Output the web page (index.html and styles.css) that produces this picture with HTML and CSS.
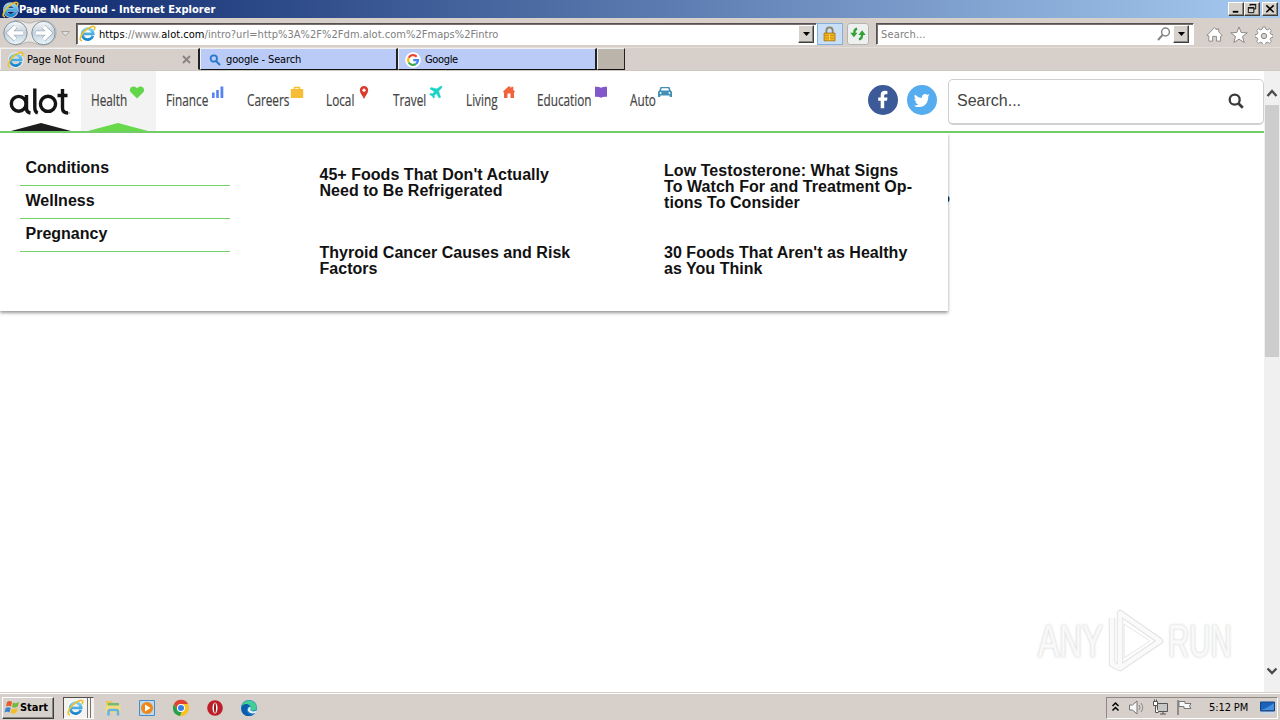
FILE: index.html
```html
<!DOCTYPE html>
<html lang="en">
<head>
<meta charset="utf-8">
<title>Page Not Found</title>
<link rel="stylesheet" href="styles.css">
</head>
<body>
<svg class="defs" width="0" height="0" aria-hidden="true">
  <defs>
    <linearGradient id="ieBlue" x1="0" y1="0" x2="0" y2="1"><stop offset="0" stop-color="#7ed4f6"/><stop offset="1" stop-color="#1683ca"/></linearGradient>
    <linearGradient id="orb" x1="0" y1="0" x2="0" y2="1"><stop offset="0" stop-color="#f6f9fb"/><stop offset=".5" stop-color="#c3d1dc"/><stop offset="1" stop-color="#e9f6fb"/></linearGradient>
    <symbol id="ie" viewBox="0 0 18 18">
      <path d="M15.2 11.6A6.2 6.2 0 1 1 15.5 9.2H5.2" fill="none" stroke="#fff" stroke-width="4.2" opacity=".7"/>
      <path d="M14.7 11.5A5.8 5.8 0 1 1 15 9.4H5" fill="none" stroke="url(#ieBlue)" stroke-width="3"/>
      <path d="M3.2 16.5C-.2 17 1 11.500 5.600 6.700 10 2.200 16 .2 16.700 2.400c.3.900-.2 2-.9 3.100" fill="none" stroke="#eec02c" stroke-width="1.700"/>
    </symbol>
  </defs>
</svg>
<div class="desktop">
  <header class="titlebar">
    <svg class="ie-title" viewBox="0 0 18 18"><use href="#ie"/></svg>
    <span class="title-text">Page Not Found - Internet Explorer</span>
    <div class="window-buttons">
      <span class="bevel wbtn"><svg viewBox="0 0 15 13"><path d="M4 9.500h6" stroke="#000" stroke-width="2"/></svg></span>
      <span class="bevel wbtn"><svg viewBox="0 0 15 13"><path d="M5.500 3V1.500h6v5H9.500M3.500 5.500h6v5h-6zM5 2h7M3 5h7" fill="none" stroke="#000"/></svg></span>
      <span class="bevel wbtn wclose"><svg viewBox="0 0 15 13"><path d="M3.500 2.500l8 7.500M11.500 2.500l-8 7.500" stroke="#000" stroke-width="1.700"/></svg></span>
    </div>
  </header>

  <div class="toolbar">
    <svg class="navorbs" viewBox="0 0 76 29">
      <path d="M15 2.500C22 2 25 5 29 5s8-3 15-2.500A12 12 0 0 1 44 27C37 27 34 24 29 24s-7 3-14 3z" fill="#e9e7e5" stroke="#aaa8a6" stroke-width=".8"/>
      <circle cx="15.500" cy="15" r="11.700" fill="url(#orb)" stroke="#85929c" stroke-width="1"/>
      <circle cx="43.500" cy="15" r="11.700" fill="url(#orb)" stroke="#85929c" stroke-width="1"/>
      <path d="M23 15H9.500M15.500 8.500L9 15l6.500 6.500" fill="none" stroke="#a3b1bd" stroke-width="4.800"/>
      <path d="M23 15H9.500M15.500 8.500L9 15l6.500 6.500" fill="none" stroke="#fff" stroke-width="3.400"/>
      <path d="M36 15h13.500M43.500 8.500L50 15l-6.500 6.500" fill="none" stroke="#a3b1bd" stroke-width="4.800"/>
      <path d="M36 15h13.500M43.500 8.500L50 15l-6.500 6.500" fill="none" stroke="#fff" stroke-width="3.400"/>
      <path d="M61.500 13.500h8l-4 4.500z" fill="#e4e0dc" stroke="#aaa6a2"/>
    </svg>
    <div class="field address">
      <svg class="ie-field" viewBox="0 0 18 18"><use href="#ie"/></svg>
      <span class="url"><b>https</b>://www.<b>alot.com</b>/intro?url=http%3A%2F%2Fdm.alot.com%2Fmaps%2Fintro</span>
      <span class="bevel drop"><svg viewBox="0 0 7 4"><path d="M0 0h7L3.500 4z"/></svg></span>
    </div>
    <span class="lock"><svg viewBox="0 0 26 22"><path d="M9 11V7.500C9 2.500 16 2.500 16 7.500V11" fill="none" stroke="#8c8466" stroke-width="2"/><path d="M6.500 10h12v8.500h-12z" fill="#f3b51b" stroke="#a97913"/><path d="M7 12.500h11M7 15.500h11" stroke="#cf8d12"/><path d="M12.500 11v7" stroke="#fbdc6a"/></svg></span>
    <span class="refresh"><svg viewBox="0 0 22 22"><path d="M10 5Q6.500 6 7 10" fill="none" stroke="#35a035" stroke-width="2.500"/><path d="M2.500 9.500h8L6.500 14.500zM11.500 12h8l-4-5z" fill="#35a035"/><path d="M12 17Q16 16 15.500 11" fill="none" stroke="#35a035" stroke-width="2.500"/></svg></span>
    <div class="field browser-search">
      <span class="placeholder">Search...</span>
      <svg class="mag" viewBox="0 0 14 14"><circle cx="8.500" cy="5" r="3.900" fill="none" stroke="#858585" stroke-width="1.500"/><path d="M5.800 7.800L1 13" stroke="#858585" stroke-width="2"/></svg>
      <span class="bevel drop"><svg viewBox="0 0 7 4"><path d="M0 0h7L3.500 4z"/></svg></span>
    </div>
    <div class="tools">
      <svg viewBox="0 0 18 18"><path d="M9 1.800l2.500 2.500V3h2v3.300L17 9.800l-1.500 1V16h-4.300v-5H7v5H3v-5.500L1 9.800z" fill="#fff" stroke="#8b8a88"/></svg>
      <svg viewBox="0 0 18 18"><path d="M9 1l2.200 5.500 6 .3-4.700 3.700 1.700 6L9 13.200l-5.200 3.300 1.700-6L.8 6.800l6-.3z" fill="#fff" stroke="#8b8a88"/></svg>
      <svg viewBox="0 0 18 18"><path d="M7.700 1h2.600l.5 2.200 1.700.7 2-1.200 1.800 1.800-1.200 2 .7 1.700 2.200.5v2.600l-2.200.5-.7 1.700 1.200 2-1.800 1.800-2-1.200-1.700.7-.5 2.200H7.700l-.5-2.200-1.700-.7-2 1.200-1.800-1.800 1.200-2-.7-1.700L0 11.300V8.700l2.200-.5.700-1.700-1.200-2 1.800-1.800 2 1.200 1.700-.7z" fill="#fff" stroke="#8b8a88" stroke-width=".9"/><circle cx="9" cy="10" r="2.700" fill="#d6cfca" stroke="#8b8a88"/></svg>
    </div>
  </div>

  <div class="tabs">
    <div class="tab tab-active"><svg class="ie-tab" viewBox="0 0 18 18"><use href="#ie"/></svg><span class="t1">Page Not Found</span><svg class="x" viewBox="0 0 9 9"><path d="M1 1l7 7M8 1L1 8" stroke="#88837f" stroke-width="1.800"/></svg></div>
    <div class="tab"><svg class="tab-mag" viewBox="0 0 12 12"><circle cx="4.800" cy="4.500" r="3.200" fill="none" stroke="#2878ca" stroke-width="1.800"/><path d="M7 7l4 4" stroke="#2878ca" stroke-width="2"/></svg><span class="t2">google - Search</span></div>
    <div class="tab tab-google"><svg class="google" viewBox="0 0 16 16"><circle cx="8" cy="8" r="7.800" fill="#fff"/><g fill="none" stroke-width="2.200"><path d="M11.700 4.700A5 5 0 0 0 3.700 5.700" stroke="#ea4335"/><path d="M3.700 5.700a5 5 0 0 0 0 4.800" stroke="#fbbc05"/><path d="M3.700 10.500a5 5 0 0 0 7.300 1.400" stroke="#34a853"/><path d="M11 11.900A5 5 0 0 0 13 8.200H8.200" stroke="#4285f4"/></g></svg><span class="t3">Google</span></div>
    <div class="newtab"></div>
  </div>

  <div class="viewport">
    <main class="page">
      <div class="sitebar">
        <div class="logo">
          <svg viewBox="0 0 81 60">
            <g fill="none" stroke="#151515" stroke-width="3.400"><circle cx="18.700" cy="32.800" r="7.400"/><path d="M26.500 24V37.500q0 4 4 4.500M34.800 17.500V37q0 4 3 5M62.500 18V37q0 5 5.500 5M57.500 24.500h10"/><circle cx="48" cy="32.800" r="7.600"/></g>
            <circle cx="69" cy="42" r=".7" fill="#555"/>
            <path d="M11 60l30-8 30 8z" fill="#1d1d1b"/>
          </svg>
        </div>
        <nav class="menu">
          <a class="item health"><span>Health</span><svg viewBox="0 0 16 13"><path d="M8 12.500L1.500 6C-1 2.500 4-2 8 2.200 12-2 17 2.500 14.500 6z" fill="#62d64b"/></svg></a>
          <a class="item finance"><span>Finance</span><svg viewBox="0 0 16 13"><path d="M2 6.500h2.600V12H2zM6.200 4h2.600v8H6.200zM10.500.5h2.800V12h-2.800z" fill="#5684ef"/></svg></a>
          <a class="item careers"><span>Careers</span><svg viewBox="0 0 16 13"><path d="M1.800 3h12.400v9H1.800z" fill="#f7bd36"/><path d="M5.500 3.500v-2h5v2" fill="none" stroke="#f7bd36" stroke-width="1.400"/></svg></a>
          <a class="item local"><span>Local</span><svg viewBox="0 0 16 13"><path d="M8 13C6.500 9.500 3.800 7 3.800 4.200 3.800 1.500 6 0 8 0s4.200 1.500 4.200 4.200C12.200 7 9.500 9.500 8 13z" fill="#db3b2d"/><circle cx="8" cy="4.200" r="1.600" fill="#fff"/></svg></a>
          <a class="item travel"><span>Travel</span><svg viewBox="0 0 16 13"><path d="M13.500 0c1 .6.200 2-.5 2.700L10.600 5l2 6.200-1.500.8L8.500 7.400 6.300 9.300l.3 2-1 .9L4 9.800 1.600 8.500l.9-1.100 2 .3L6.500 5.700 2 2.800l1-1.300 6 1.400L11.500 1c.6-.6 1.500-1.200 2-1z" fill="#18d3c6" stroke="#18d3c6" stroke-width=".5"/></svg></a>
          <a class="item living"><span>Living</span><svg viewBox="0 0 16 13"><path d="M8 0l2.300 2V.8h2V4L14 5.500 13 6.800V12H9.500V7.500h-3V12H3V6.800L2 5.500z" fill="#f3633b"/></svg></a>
          <a class="item education"><span>Education</span><svg viewBox="0 0 16 13"><path d="M2 .8q3.500-.5 6 1 2.500-1.500 6-1v10q-3.500-.5-6 1-2.500-1.500-6-1z" fill="#8157c9"/></svg></a>
          <a class="item auto"><span>Auto</span><svg viewBox="0 0 16 13"><path d="M3.500 1h9l1.200 3.500 1.300 1.300V11h-2.300V9.500H3.300V11H1V5.800l1.300-1.300z" fill="#438fb5"/><path d="M4.700 2.200h6.600l.7 2.300H4z" fill="#fff"/><circle cx="3.600" cy="7" r=".9" fill="#fff"/><circle cx="12.400" cy="7" r=".9" fill="#fff"/></svg></a>
        </nav>
        <div class="social">
          <svg viewBox="0 0 30 30"><circle cx="15" cy="15" r="15" fill="#3c5998"/><path d="M12.700 23.200v-7.400h-2.500v-3.400h2.500V10c0-3 1.700-4.200 4.100-4.200l2.600.1v3.300h-1.700c-1.200 0-1.500.6-1.500 1.500v1.700h3.300l-.5 3.400h-2.800v7.400z" fill="#fff"/></svg>
          <svg viewBox="0 0 30 30"><circle cx="15" cy="15" r="15" fill="#55acee"/><path d="M23 9.800l-1.700 1.500C21.500 18 17 22.700 11.700 22c-2 0-3.500-.5-4.900-1.300 1.800.1 3.500-.4 4.700-1.400-1.500-.2-2.600-1-3-2.300h1.400c-1.500-.5-2.500-1.700-2.500-3.300l1.400.4C7.500 12.800 7 11 8 9.500c1.700 2 4 3.300 6.900 3.400-.7-3.200 3-5.300 5.300-3.100l2.100-.8-1.200 1.800z" fill="#fff"/></svg>
        </div>
        <div class="site-search"><span>Search...</span><svg viewBox="0 0 16 16"><circle cx="6.700" cy="6.700" r="5" fill="none" stroke="#3a3a3a" stroke-width="2.300"/><path d="M10.300 10.300l4.500 4.500" stroke="#3a3a3a" stroke-width="2.700"/></svg></div>
        <svg class="peak" viewBox="0 0 60 8"><path d="M0 8l30-8 30 8z" fill="#67d94b"/></svg>
      </div>
      <section class="mega">
        <ul class="topics"><li>Conditions</li><li>Wellness</li><li>Pregnancy</li></ul>
        <div class="articles">
          <a class="a1">45+ Foods That Don't Actually<br>Need to Be Refrigerated</a>
          <a class="a2">Low Testosterone: What Signs<br>To Watch For and Treatment Op-<br>tions To Consider</a>
          <a class="a3">Thyroid Cancer Causes and Risk<br>Factors</a>
          <a class="a4">30 Foods That Aren't as Healthy<br>as You Think</a>
        </div>
      </section>
      <span class="peeking-mark">?</span>
      <div class="watermark">
        <span class="wm-any">ANY</span>
        <svg viewBox="0 0 60 64"><g fill="none" stroke="#e3e3e3" stroke-width="6.500" stroke-linejoin="round"><path d="M14 4v55l40-27z"/><path d="M6 9v46l7 4"/></g><g fill="none" stroke="#fafafa" stroke-width="4.500" stroke-linejoin="round"><path d="M6 9v46l7 4"/><path d="M14 4v55l40-27z"/></g><path d="M18 15v34l26-17z" fill="#fff" stroke="#e6e6e6"/></svg>
        <span class="wm-run">RUN</span>
      </div>
    </main>
    <aside class="scroll">
      <svg viewBox="0 0 16 34"><path d="M3.500 25L8 20l4.500 5" fill="none" stroke="#4b4b4b" stroke-width="2.300"/></svg>
      <div class="thumb"></div>
      <svg class="down" viewBox="0 0 16 34"><path d="M3.500 10.500L8 15l4.500-4.500" fill="none" stroke="#4b4b4b" stroke-width="2.300"/></svg>
    </aside>
  </div>

  <footer class="taskbar">
    <div class="bevel start"><svg viewBox="0 0 16 15"><path d="M3 2q3-2 5 0L7 6.500Q4.500 5 2 6.500z" fill="#e95a2b"/><path d="M9 2.500q3 1.500 6-.5l-1.200 4.500q-3 2-5.800.5z" fill="#79b63c"/><path d="M1.700 8q2.500-1.500 5 0l-1.200 4.500q-2.500-1.500-5 0z" fill="#3d83d2"/><path d="M7.700 8.500q3 1.500 6-.5l-1.200 4.500q-3 2-5.800.5z" fill="#f5bd24"/></svg><span>Start</span></div>
    <div class="running"><svg viewBox="0 0 18 18"><use href="#ie"/></svg><i></i><i></i></div>
    <div class="quick">
      <svg viewBox="0 0 18 18"><path d="M2 2h6l1 2h6v9H2z" fill="#e8c65a"/><path d="M4 4h11v5H4z" fill="#77b96e"/><path d="M1.500 6.500h15v7h-15z" fill="#f3dc83"/><path d="M4.500 16.500V12.500q0-1.500 1.500-1.500h6.500q1.500 0 1.500 1.500v4" fill="none" stroke="#69b3df" stroke-width="2.500"/></svg>
      <svg viewBox="0 0 18 18"><path d="M1.500 1.500h15v15h-15z" fill="#b9daf0" stroke="#4a8cc6"/><circle cx="9" cy="9" r="6" fill="#f18718"/><path d="M7 5.500v7l5.500-3.500z" fill="#fff"/></svg>
      <svg viewBox="0 0 18 18"><circle cx="9" cy="9" r="8" fill="#fbc21b"/><path d="M2 5a8 8 0 0 1 14 0H9a4 4 0 0 0-3.500 6z" fill="#df4334"/><path d="M2 5l4 7 3.500 1L8 17A8 8 0 0 1 2 5z" fill="#25a052"/><circle cx="9" cy="9" r="4" fill="#fff"/><circle cx="9" cy="9" r="3" fill="#377fea"/></svg>
      <svg viewBox="0 0 18 18"><circle cx="9" cy="9" r="7.800" fill="#bd1e27"/><ellipse cx="9" cy="9" rx="2.500" ry="5.500" fill="#fff"/><ellipse cx="9" cy="9" rx="1" ry="5" fill="#9d111a"/></svg>
      <svg viewBox="0 0 18 18"><circle cx="9" cy="9" r="8" fill="#197dcd"/><path d="M1.500 7.500C3 0 14-1 16.500 7c1 4-3 6-6.500 4 2-1 1.500-4-1-5-3-1-6 0-7.500 1.500z" fill="#43cf91"/><path d="M2 7c3-3 7-2.500 8 .5C7 7 5.500 11 8 14c2 2 5 2 7 .5C9 20-1 16 2 7z" fill="#0c5cac"/><path d="M10 7.500q1.500 1.800 0 3.500 3 2.500 6.500.5v2q-6 2.500-8.500-1.500-1-2.500 2-4.500z" fill="#e3eff0"/></svg>
    </div>
    <div class="tray">
      <svg class="chev" viewBox="0 0 9 13"><path d="M1.500 5l3-3 3 3M1.500 9.500l3-3 3 3" fill="none" stroke="#000" stroke-width="1.500"/></svg>
      <svg class="speaker" viewBox="0 0 18 17"><path d="M1.500 6h3L9 2v13l-4.500-4h-3z" fill="#f8f8f8" stroke="#777"/><path d="M11 6q2 2.500 0 5M13 4q3.500 4.500 0 9" fill="none" stroke="#888"/></svg>
      <svg class="net" viewBox="0 0 18 17"><path d="M5.500 4.500h10v8h-10zM8 15h6M11 13v2" fill="#c7c7c5" stroke="#555"/><path d="M1.500 2.500h4v4h-4zM3.500 6.500v7h3M2.500 2V.5M4.500 2V.5" fill="#fff" stroke="#555"/></svg>
      <svg class="flag" viewBox="0 0 18 17"><path d="M2 1v15" stroke="#777" stroke-width="1.500"/><path d="M3 2.500h6v2h6q-3 2.500 0 5H8v-2H3z" fill="#f7f7f7" stroke="#777"/></svg>
      <span>5:12 PM</span>
      <svg class="showdesk" viewBox="0 0 16 14"><path d="M.5 1h14v9H.5z" fill="#1c61ba" stroke="#134486"/><path d="M1 9Q8 7 14 2v7z" fill="#4590db"/><path d="M2 12h12" stroke="#c3d7e8" stroke-width="2"/></svg>
    </div>
  </footer>
</div>
</body>
</html>
```
FILE: styles.css
```css
* { box-sizing: border-box; }
body { margin: 0; background: #fff; color: #111; }
svg { display: block; flex: none; }
.defs { position: absolute; }
.desktop { width: 1280px; height: 720px; overflow: hidden; display: flex; flex-direction: column; background: #d6cfca; font: 11px "DejaVu Sans Condensed", "DejaVu Sans", sans-serif; font-stretch: condensed; white-space: nowrap; }
.bevel { background: #d6d2cb; border: 1px solid; border-color: #fff #403e3b #403e3b #fff; box-shadow: inset -1px -1px #8b8782; display: flex; align-items: center; justify-content: center; }

.titlebar { height: 18px; flex: none; background: linear-gradient(90deg, #0c276c, #a6caf0); display: flex; align-items: center; padding: 0 2px; color: #fff; font-weight: bold; }
.ie-title { width: 17px; height: 17px; }
.title-text { letter-spacing: .03px; }
.window-buttons { margin-left: auto; display: flex; }
.wbtn { width: 16px; height: 14px; }
.wbtn svg { width: 14px; height: 12px; }
.wclose { margin-left: 2px; }

.toolbar { height: 29px; flex: none; display: flex; align-items: center; }
.navorbs { width: 76px; height: 29px; }
.field { background: #fff; height: 22px; border: 1px solid; border-color: #565050 #fff #fff #565050; box-shadow: inset 1px 1px #79716d; display: flex; align-items: center; margin-top: 2px; color: #808080; }
.address { width: 741px; padding-left: 2px; }
.ie-field { width: 17px; height: 17px; margin-right: 3px; }
.url { letter-spacing: .03px; padding-top: 1px; }
.url b { font-weight: normal; color: #000; }
.drop { width: 16px; height: 18px; margin-left: auto; margin-right: 2px; }
.drop svg { width: 7px; height: 4px; }
.lock { width: 26px; height: 22px; margin-top: 2px; border: 1px solid #87aedd; background: #c9dff8; }
.lock svg { width: 24px; height: 20px; }
.refresh { width: 22px; height: 22px; margin: 2px 7px 0 4px; border: 1px solid #b7b3af; border-radius: 3px; background: #edf0ee; }
.refresh svg { width: 20px; height: 20px; }
.browser-search { width: 318px; padding-left: 4px; }
.placeholder { letter-spacing: .15px; padding-top: 1px; }
.mag { width: 14px; height: 14px; margin-left: auto; margin-right: 2px; }
.browser-search .drop { margin-left: 0; margin-right: 4px; }
.tools { display: flex; gap: 7px; padding-left: 12px; padding-top: 5px; }
.tools svg { width: 17px; height: 17px; }
.tools svg + svg { width: 18px; height: 18px; }

.tabs { height: 24px; flex: none; display: flex; border-top: 1px solid #e3ded9; border-bottom: 1px solid #d0c7bf; }
.tab { width: 198px; height: 22px; display: flex; align-items: center; padding: 1px 0 0 8px; background: #b9cbf6; border: 1px solid #f1f1f1; border-right: 2px solid #222; border-bottom: 1px solid #111; color: #000; }
.tab-active { width: 200px; background: #d6cfca; border-bottom-color: #d6cfca; padding-left: 6px; }
.ie-tab { width: 17px; height: 17px; margin-right: 3px; }
.tab-mag { width: 12px; height: 12px; margin-right: 5px; }
.tab-google { width: 199px; padding-left: 6px; }
.google { width: 16px; height: 16px; margin-right: 4px; }
.t1 { letter-spacing: 0; }
.t2 { letter-spacing: -.15px; }
.t3 { letter-spacing: -.35px; }
.x { width: 9px; height: 9px; margin-left: auto; margin-right: 7px; }
.newtab { width: 28px; height: 22px; background: #bbb4ab; border: 1px solid #eee; border-right: 1px solid #222; border-bottom: 1px solid #111; }

.viewport { height: 621px; flex: none; display: flex; background: #fff; }
.page { width: 1264px; height: 621px; position: relative; overflow: hidden; }
.sitebar { height: 62px; border-bottom: 2px solid #72cd68; display: flex; position: relative; }
.logo { width: 81px; height: 60px; }
.logo svg { width: 81px; height: 60px; }
.menu { display: flex; width: 787px; }
.item { display: flex; padding-left: 10px; align-items: flex-start; color: #444; font: 16px/20px "Open Sans", "Noto Sans", sans-serif; -webkit-text-stroke: .2px #444; }
.item span { display: block; transform: scaleX(.735); transform-origin: left; margin-top: 19px; }
.item svg { width: 16px; height: 13px; margin: 15px 0 0 1px; }
.health { width: 75px; background: #f3f3f3; }
.finance { width: 81px; }
.careers { width: 79px; }
.local { width: 67px; }
.travel { width: 73px; }
.living { width: 71px; }
.education { width: 93px; }
.auto { width: 90px; }
.health span { width: 37px; }
.finance span { width: 43px; }
.careers span { width: 41px; }
.local span { width: 29px; }
.travel span { width: 34px; }
.living span { width: 34px; }
.education span { width: 55px; }
.auto span { width: 26px; }
.social { display: flex; gap: 9px; padding-top: 14px; width: 80px; }
.social svg { width: 30px; height: 30px; }
.site-search { margin-top: 8px; width: 316px; height: 46px; border: 1px solid #d0d0d0; border-bottom-width: 2px; border-radius: 5px; display: flex; align-items: center; padding: 0 19px 2px 8px; justify-content: space-between; color: #444; font: 16px "Liberation Sans", Arial, sans-serif; }
.site-search svg { width: 16px; height: 16px; }
.peak { position: absolute; left: 88px; bottom: 0; width: 60px; height: 8px; }

.mega { position: relative; z-index: 1; width: 948px; height: 178px; background: #fff; box-shadow: 0 2px 3px rgba(0,0,0,.4); clip-path: inset(0 -6px -6px 0); display: flex; font: bold 16px/16px "Liberation Sans", Arial, sans-serif; color: #111; }
.topics { list-style: none; margin: 0; padding: 20px 0 0 20px; width: 319.500px; }
.topics li { width: 210px; height: 33px; border-bottom: 1px solid #72d164; padding: 7px 0 0 5.500px; }
.articles { display: grid; grid-template-columns: 344.500px 284px; grid-template-rows: 79px 60px; padding-top: 30px; align-content: start; letter-spacing: .03px; }
.a1 { padding-top: 4px; }
.a2 { letter-spacing: .06px; }
.a3, .a4 { padding-top: 3px; }
.peeking-mark { position: absolute; left: 938px; top: 119px; font: 22px "Liberation Sans", Arial, sans-serif; color: #333; }
.watermark { position: absolute; left: 1038px; top: 538px; display: flex; align-items: center; color: #fafafa; font: 46px/64px "Liberation Sans", Arial, sans-serif; -webkit-text-stroke: 1px #f4f4f4; text-shadow: 0 0 3px #bbb; }
.watermark span { transform: scaleX(.69); transform-origin: left; width: 68px; }
.watermark svg { width: 60px; height: 64px; }
.watermark .wm-run { margin-left: 2px; transform: scaleX(.64); }
.scroll { width: 16px; background: #f0f0f0; display: flex; flex-direction: column; }
.scroll svg { width: 16px; height: 34px; }
.thumb { width: 14px; height: 252px; background: #cdcdcd; margin-left: 1px; }
.scroll .down { margin-top: auto; }

.taskbar { height: 28px; flex: none; border-top: 1px solid #d6cfca; box-shadow: inset 0 1px #fff; display: flex; align-items: center; padding: 2px 2px 0; background: #d6cfca; color: #000; }
.start { width: 52px; height: 22px; font-weight: bold; justify-content: flex-start; padding-left: 1px; }
.start svg { width: 16px; height: 15px; }
.start span { font-size: 11px; letter-spacing: -.05px; }
.running { width: 31px; height: 22px; margin-left: 9px; background: #f5f3f0; border: 1px solid; border-color: #53504c #f5f3f0 #fff #53504c; display: flex; align-items: center; padding-left: 3px; }
.running svg { width: 17px; height: 17px; margin-right: 1px; }
.running i { width: 1px; height: 20px; background: #77736f; margin-left: 2px; }
.quick { display: flex; gap: 16px; margin-left: 10px; }
.quick svg { width: 18px; height: 18px; }
.tray { margin-left: auto; width: 172px; height: 22px; border: 1px solid; border-color: #8e8984 #fff #fff #8e8984; display: flex; align-items: center; padding: 0 1px 0 4px; }
.chev { width: 9px; height: 13px; margin-right: 8px; }
.speaker, .net, .flag { width: 18px; height: 17px; margin-right: 6px; }
.flag { margin-right: 15px; }
.tray span { letter-spacing: -.1px; }
.showdesk { width: 16px; height: 14px; margin-left: auto; }
```
